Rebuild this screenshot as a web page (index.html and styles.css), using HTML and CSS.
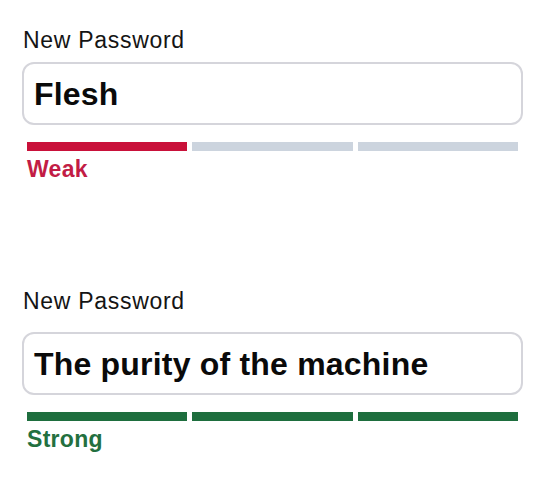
FILE: index.html
```html
<!DOCTYPE html>
<html lang="en">
<head>
<meta charset="utf-8">
<title>Password strength</title>
<link rel="stylesheet" href="styles.css">
</head>
<body>
<main class="page">
  <section class="field field--weak">
    <label class="field-label">New Password</label>
    <div class="field-input">Flesh</div>
    <div class="meter">
      <span class="meter-bar meter-bar--on"></span>
      <span class="meter-bar"></span>
      <span class="meter-bar"></span>
    </div>
    <div class="meter-text">Weak</div>
  </section>
  <section class="field field--strong">
    <label class="field-label">New Password</label>
    <div class="field-input">The purity of the machine</div>
    <div class="meter">
      <span class="meter-bar meter-bar--on"></span>
      <span class="meter-bar meter-bar--on"></span>
      <span class="meter-bar meter-bar--on"></span>
    </div>
    <div class="meter-text">Strong</div>
  </section>
</main>
</body>
</html>
```
FILE: styles.css
```css
html, body {
  margin: 0;
  padding: 0;
  background: #ffffff;
}

.page {
  padding: 26px 17px 0 22px;
  font-family: "Liberation Sans", Arial, Helvetica, sans-serif;
  color: #111111;
}

.field {
  display: flex;
  flex-direction: column;
}

.field + .field {
  margin-top: 105px;
}

.field-label {
  display: block;
  font-size: 23px;
  line-height: 28px;
  letter-spacing: 0.7px;
  padding-left: 1px;
  color: #141414;
  margin-bottom: 8px;
}

.field--strong .field-label {
  margin-bottom: 17px;
}

.field-input {
  border: 2px solid #d5d5db;
  border-radius: 12px;
  box-sizing: content-box;
  padding: 5px 10px 0 10px;
  height: 54px;
  font-size: 32px;
  font-weight: 700;
  line-height: 51px;
  letter-spacing: 0.2px;
  color: #0a0a0a;
  white-space: nowrap;
}

.meter {
  display: flex;
  gap: 5px;
  margin: 17px 5px 0 5px;
}

.meter-bar {
  flex: 1;
  height: 9px;
  background: #ccd4de;
}

.field--weak .meter-bar--on {
  background: #c9113a;
}

.field--strong .meter-bar--on {
  background: #1e6e3e;
}

.meter-text {
  margin: 5px 0 0 5px;
  font-size: 23px;
  font-weight: 700;
  line-height: 26px;
  letter-spacing: 0.3px;
}

.field--weak .meter-text {
  color: #c21c45;
}

.field--strong .meter-text {
  color: #23703f;
}
```
